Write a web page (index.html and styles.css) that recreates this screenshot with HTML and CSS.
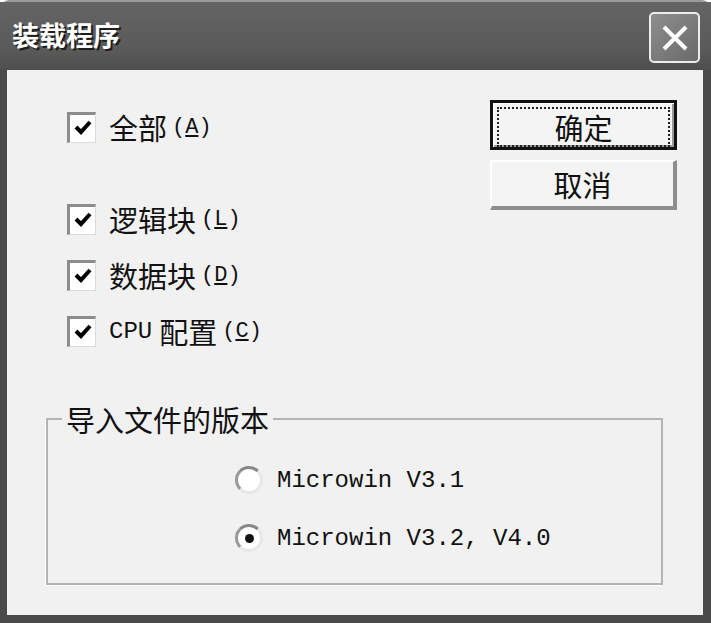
FILE: index.html
```
<!DOCTYPE html>
<html lang="zh-CN">
<head>
  <meta charset="UTF-8">
  <title>装载程序</title>
  <link rel="stylesheet" href="styles.css">
</head>
<body>
  <div class="window">
    <div class="titlebar">
      <span class="title">装载程序</span>
      <button class="close-btn">
        <svg width="30" height="30" viewBox="0 0 30 30"><path d="M4 4 L26 26 M26 4 L4 26" stroke="#fff" stroke-width="4" /></svg>
      </button>
    </div>
    <div class="client">
      <div class="top">
        <div class="checks">
          <label class="check first">
            <span class="box"><svg width="20" height="18" viewBox="0 0 20 18"><path d="M3 8 L8 13 L17 3" fill="none" stroke="#000" stroke-width="4" /></svg></span>
            <span class="cjk">全部</span><span class="mono">(<u>A</u>)</span>
          </label>
          <label class="check second">
            <span class="box"><svg width="20" height="18" viewBox="0 0 20 18"><path d="M3 8 L8 13 L17 3" fill="none" stroke="#000" stroke-width="4" /></svg></span>
            <span class="cjk">逻辑块</span><span class="mono">(<u>L</u>)</span>
          </label>
          <label class="check">
            <span class="box"><svg width="20" height="18" viewBox="0 0 20 18"><path d="M3 8 L8 13 L17 3" fill="none" stroke="#000" stroke-width="4" /></svg></span>
            <span class="cjk">数据块</span><span class="mono">(<u>D</u>)</span>
          </label>
          <label class="check">
            <span class="box"><svg width="20" height="18" viewBox="0 0 20 18"><path d="M3 8 L8 13 L17 3" fill="none" stroke="#000" stroke-width="4" /></svg></span>
            <span class="mono cpu">CPU</span><span class="cjk">配置</span><span class="mono">(<u>C</u>)</span>
          </label>
        </div>
        <div class="buttons">
          <button class="btn default"><span class="focus">确定</span></button>
          <button class="btn">取消</button>
        </div>
      </div>
      <fieldset class="group">
        <legend>导入文件的版本</legend>
        <div class="radios">
          <label class="radio"><span class="circle"></span><span class="mono">Microwin V3.1</span></label>
          <label class="radio"><span class="circle checked"><span class="dot"></span></span><span class="mono">Microwin V3.2, V4.0</span></label>
        </div>
      </fieldset>
    </div>
  </div>
</body>
</html>
```
FILE: styles.css
```
body {
  margin: 0;
  background: #fff;
  font-family: "Noto Sans CJK SC", sans-serif;
  color: #111;
}
.window {
  width: 711px; height: 623px;
  box-sizing: border-box;
  background: #4a4a4a;
  border-radius: 9px 9px 0 0;
  border-top: 2px solid #9a9a9a;
  display: flex; flex-direction: column;
}
.titlebar {
  height: 68px;
  display: flex; align-items: center; justify-content: space-between;
  padding: 0 11px 0 12px;
  background: linear-gradient(#646464, #5a5a5a 70%, #4e4e4e);
}
.title {
  font-size: 27px; font-weight: bold; color: #fff;
  text-shadow: 2px 2px 0 #1e1e1e;
  margin-top: -4px;
}
.close-btn {
  width: 51px; height: 51px;
  margin-top: 3px;
  border: 2px solid #ececec; border-radius: 5px;
  background: linear-gradient(135deg, #8e8e8e, #6a6a6a);
  display: flex; align-items: center; justify-content: center;
  padding: 0;
}
.client {
  flex: 1;
  margin: 0 8px 8px 7px;
  background: #f1f1f1;
  display: flex; flex-direction: column;
}
.top {
  display: flex; justify-content: space-between;
  padding: 29px 26px 0 60px;
}
.checks { display: flex; flex-direction: column; }
.check {
  height: 56px;
  display: flex; align-items: center;
}
.check.first { margin-bottom: 36px; }
.box {
  width: 25px; height: 27px;
  background: #fff;
  border-top: 3px solid #8c8c8c; border-left: 3px solid #8c8c8c;
  border-right: 1px solid #dcdcdc; border-bottom: 1px solid #dcdcdc;
  display: flex; align-items: center; justify-content: center;
  margin-right: 13px;
}
.cjk { font-size: 29px; line-height: 30px; }
.mono {
  font-family: "Liberation Mono", monospace;
  font-size: 22px;
  margin-left: 5px;
}
.mono.cpu { font-size: 24px; margin: 0 7px 0 0; }
.buttons {
  display: flex; flex-direction: column; gap: 10px;
  margin-top: 1px;
}
.btn {
  width: 187px; height: 50px;
  font-family: "Noto Sans CJK SC", sans-serif;
  font-size: 29px; color: #111;
  background: #f4f4f4;
  border-style: solid; border-width: 2px 4px 4px 2px;
  border-color: #fff #8e8e8e #8e8e8e #fff;
  padding: 0;
}
.btn.default {
  border: 3px solid #111;
  padding: 4px;
  box-shadow: inset 1px 1px 0 #fff, inset -2px -2px 0 #999;
}
.focus {
  display: flex; align-items: center; justify-content: center;
  height: 100%;
  border: 2px dotted #222;
}
.group {
  margin: 45px 40px 0 39px;
  padding: 17px 0 16px 0;
  border: 2px solid #b4b4b4;
  box-shadow: -1px 1px 0 #fff;
}
.group legend {
  font-size: 29px; line-height: 30px;
  margin-left: 14px;
  padding: 0 4px;
}
.radios { padding-left: 187px; }
.radio {
  height: 58px;
  display: flex; align-items: center;
}
.radio .mono { font-size: 24px; margin-left: 14px; }
.circle {
  width: 28px; height: 28px; box-sizing: border-box;
  border-radius: 50%;
  background: #fff;
  border: 3px solid #e8e8e8;
  border-top-color: #888; border-left-color: #999;
  display: flex; align-items: center; justify-content: center;
}
.dot {
  width: 9px; height: 9px; border-radius: 50%;
  background: #111;
}
```
